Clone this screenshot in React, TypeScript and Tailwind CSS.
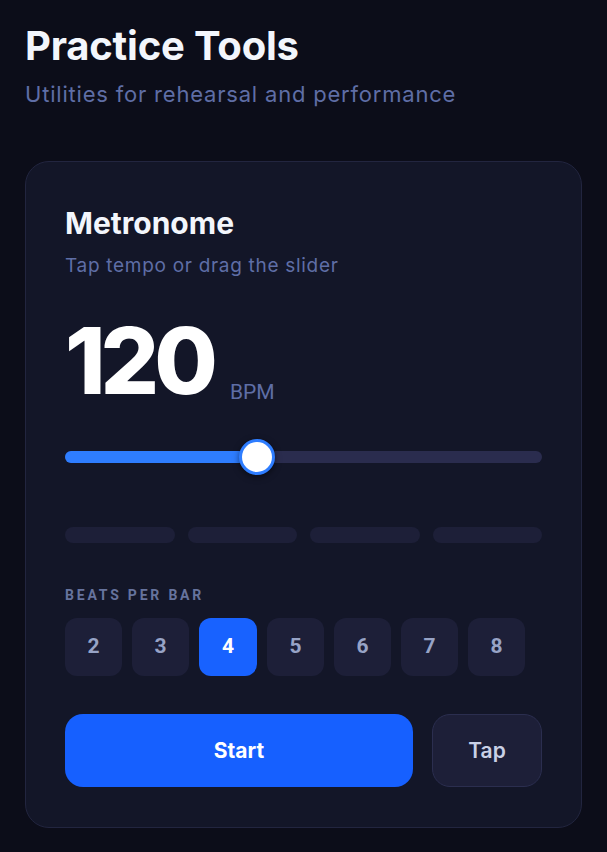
import React from "react";

const beats = [2, 3, 4, 5, 6, 7, 8];

export default function App() {
  return (
    <div
      className="min-h-[852px] bg-[#0c0d19] px-[25px] pt-[22px] pb-[26px]"
      style={{ fontFamily: "Inter, 'Noto Sans', sans-serif" }}
    >
      <h1 className="text-[40px] leading-[48px] font-bold text-[#f3f6fc] tracking-[-0.2px]">Practice Tools</h1>
      <p className="mt-[9px] text-[22px] leading-[30px] text-[#5f6ea6] tracking-[0.8px]">Utilities for rehearsal and performance</p>

      <div className="mt-[52px] rounded-[24px] border border-[#22253f] bg-[#131628] px-[39px] pt-[44px] pb-[40px]">
        <h2 className="text-[30px] leading-[34px] font-bold text-[#f3f6fc]">Metronome</h2>
        <p className="mt-[13px] text-[19px] leading-[26px] text-[#5f6ea6] tracking-[0.7px]">Tap tempo or drag the slider</p>

        <div className="mt-[34px] flex items-end gap-[17px]">
          <span className="text-[92px] leading-[96px] font-extrabold text-white tracking-[-5px]">120</span>
          <span className="mb-[5px] text-[21px] leading-[24px] text-[#5f6ea6]" style={{ fontFamily: "Roboto, sans-serif" }}>BPM</span>
        </div>

        <div className="relative mt-[30px] h-[36px]">
          <div className="absolute left-0 right-0 top-[12px] h-[12px] rounded-full bg-[#2a2c4e]" />
          <div className="absolute left-0 top-[12px] h-[12px] w-[192px] rounded-full bg-[#2e7dff]" />
          <div className="absolute left-[174px] top-0 h-[36px] w-[36px] rounded-full border-[3px] border-[#2e7dff] bg-white shadow-[0_2px_6px_rgba(0,0,0,0.5)]" />
        </div>

        <div className="mt-[52px] grid grid-cols-4 gap-[13px]">
          {[0, 1, 2, 3].map((i) => (
            <div key={i} className="h-[16px] rounded-full bg-[#1d1f38]" />
          ))}
        </div>

        <div
          className="mt-[44px] text-[14px] leading-[17px] font-bold tracking-[2.8px] text-[#66739d]"
          style={{ fontFamily: "Roboto, sans-serif" }}
        >
          BEATS PER BAR
        </div>
        <div className="mt-[14px] flex gap-[10px]">
          {beats.map((b) => (
            <button
              key={b}
              className={
                b === 4
                  ? "h-[58px] w-[58px] rounded-[12px] bg-[#1862ff] text-[21px] font-bold text-white"
                  : "h-[58px] w-[57px] rounded-[12px] bg-[#1d1f38] text-[21px] font-bold text-[#97a3c6]"
              }
              style={{ fontFamily: "Roboto, sans-serif" }}
            >
              {b}
            </button>
          ))}
        </div>

        <div className="mt-[38px] flex gap-[19px]">
          <button className="h-[73px] flex-1 rounded-[18px] bg-[#1660ff] text-[21px] font-bold text-white">Start</button>
          <button className="h-[73px] w-[110px] rounded-[18px] border border-[#2b2e4f] bg-[#1d1f38] text-[21px] font-semibold text-[#c9d0e6]">
            Tap
          </button>
        </div>
      </div>
    </div>
  );
}
